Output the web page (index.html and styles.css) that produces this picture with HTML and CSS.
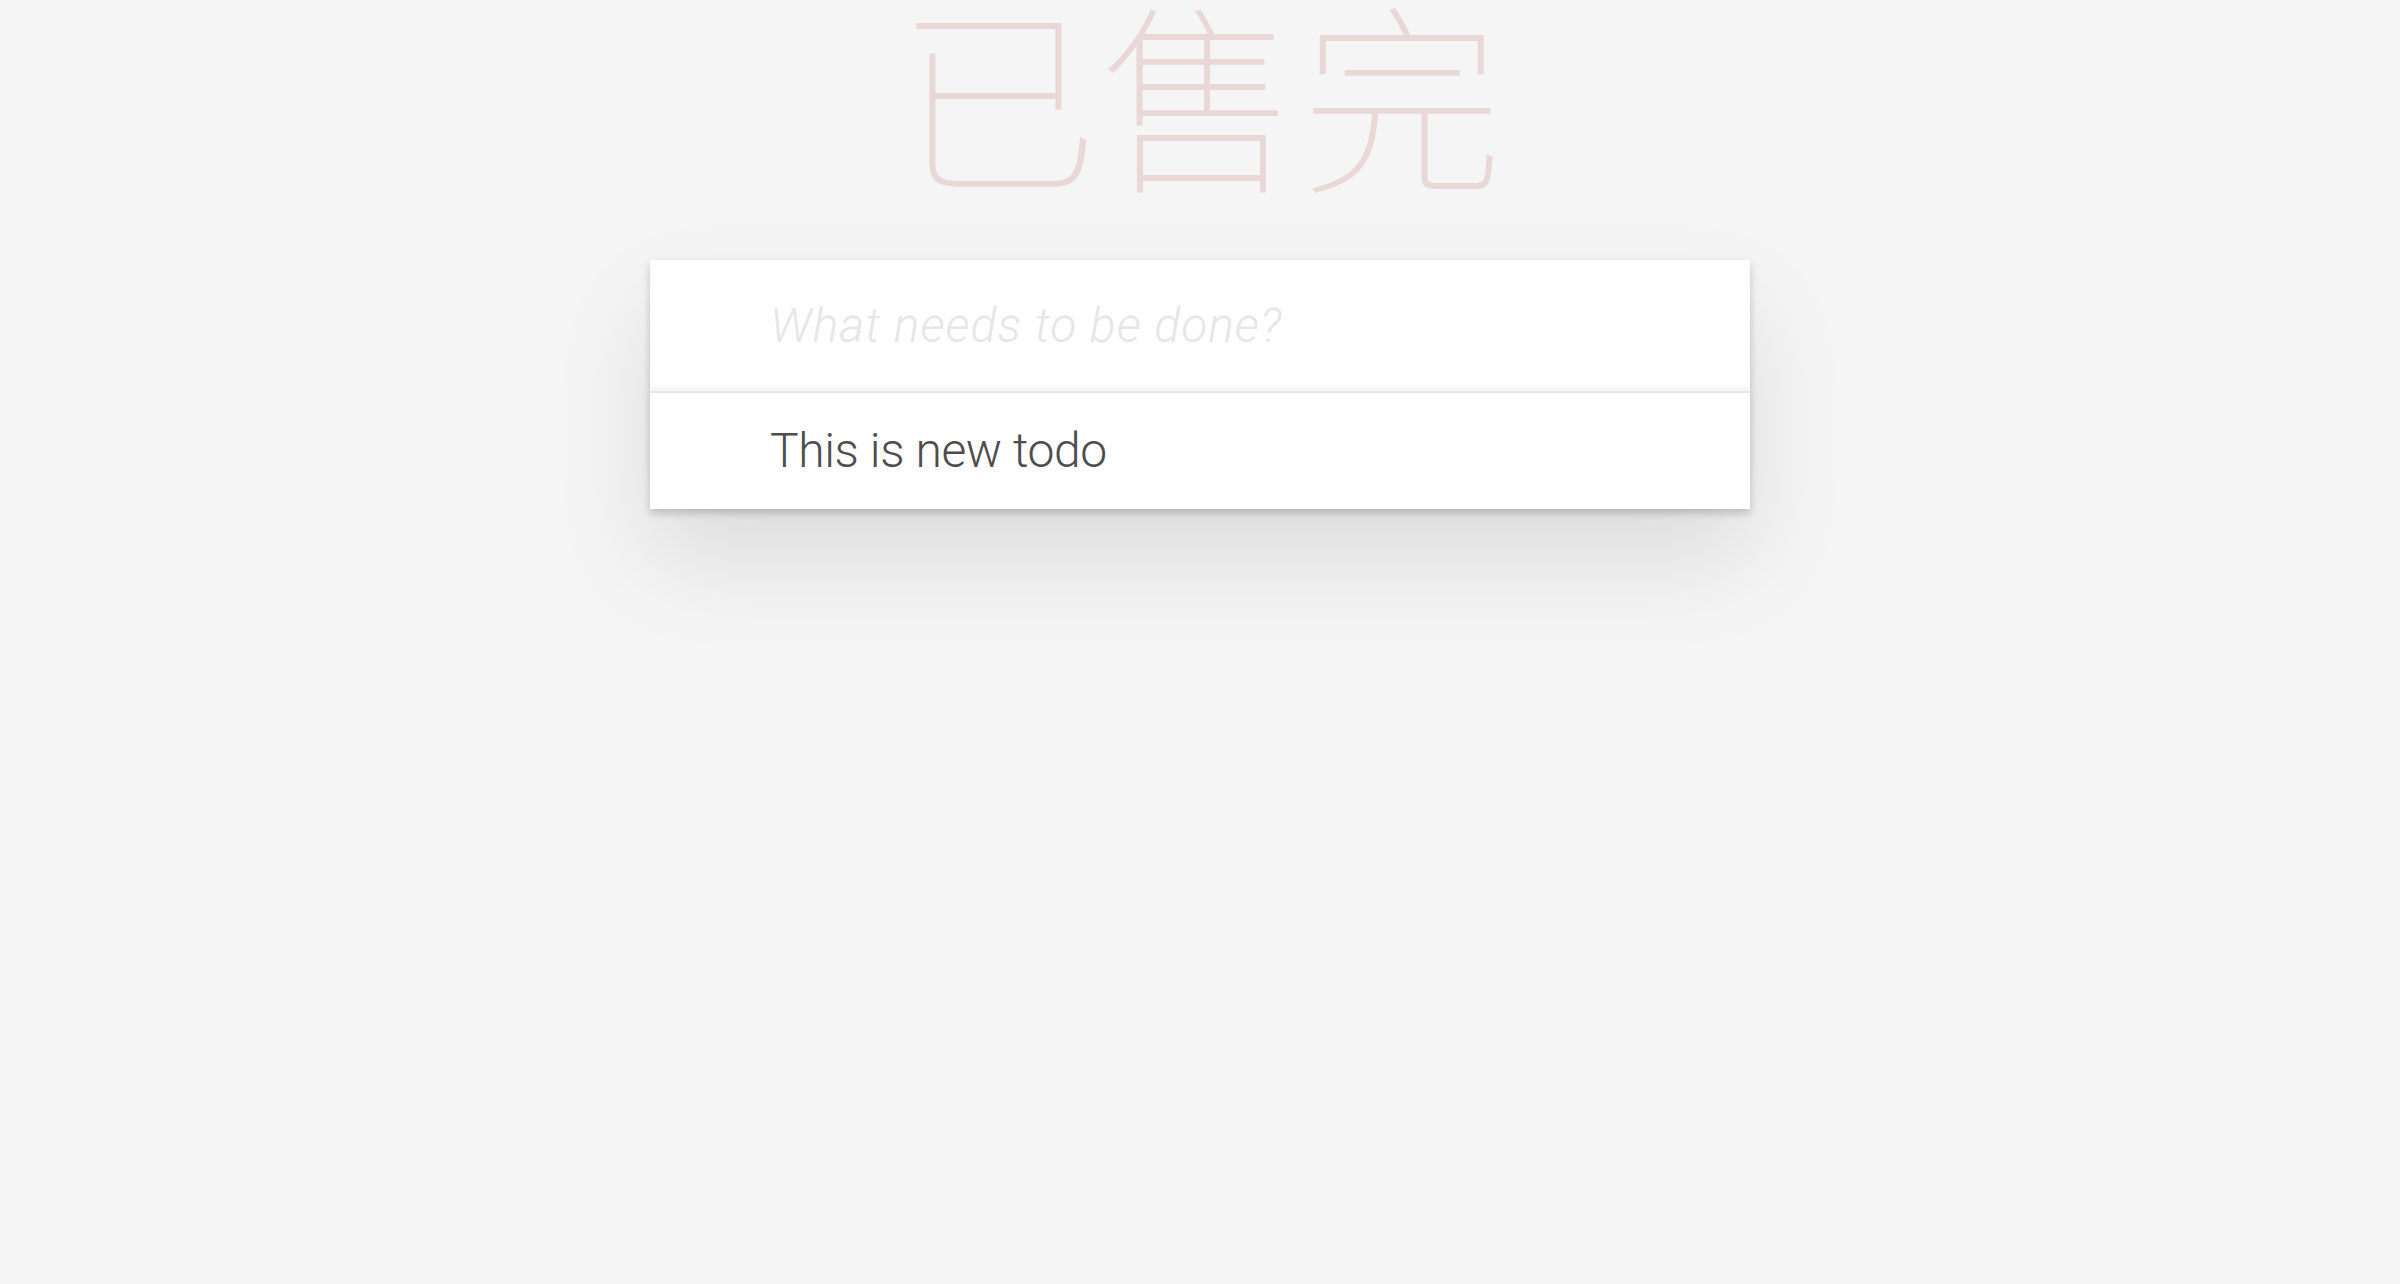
FILE: index.html
```html
<!DOCTYPE html>
<html lang="zh">
<head>
<meta charset="utf-8">
<title>Todo</title>
<link rel="stylesheet" href="styles.css">
</head>
<body>
<div class="page">
  <h1 class="title">已售完</h1>
  <section class="todoapp">
    <header class="header">
      <input class="new-todo" type="text" placeholder="What needs to be done?">
    </header>
    <section class="main">
      <ul class="todo-list">
        <li class="todo-item"><label class="todo-label">This is new todo</label></li>
      </ul>
    </section>
  </section>
</div>
</body>
</html>
```
FILE: styles.css
```css
html, body {
  margin: 0;
  padding: 0;
}
body {
  min-height: 100vh;
  background: #f5f5f5;
  color: #4d4d4d;
  font-family: Roboto, "Liberation Sans", sans-serif;
  font-weight: 300;
  font-size: 28px;
}
.page {
  max-width: 1100px;
  margin: 0 auto;
  padding-bottom: 80px;
}
.title {
  margin: 0;
  height: 260px;
  box-sizing: border-box;
  padding-top: 0;
  font-family: "Noto Sans CJK SC", sans-serif;
  font-size: 202px;
  line-height: 180px;
  font-weight: 100;
  text-align: center;
  color: rgba(175, 47, 47, 0.15);
}
.todoapp {
  background: #fff;
  box-shadow: 0 4px 8px 0 rgba(0, 0, 0, 0.2), 0 50px 100px 0 rgba(0, 0, 0, 0.1);
}
.header {
  display: block;
}
.new-todo {
  display: block;
  width: 100%;
  box-sizing: border-box;
  margin: 0;
  padding: 32px 32px 32px 120px;
  border: none;
  outline: none;
  background: rgba(0, 0, 0, 0.003);
  box-shadow: inset 0 -4px 2px rgba(0, 0, 0, 0.03);
  font-family: Roboto, "Liberation Sans", sans-serif;
  font-weight: 300;
  font-size: 48px;
  line-height: 1.4;
  color: #4d4d4d;
}
.new-todo::placeholder {
  font-style: italic;
  font-weight: 300;
  letter-spacing: 1px;
  color: #e6e6e6;
}
.main {
  border-top: 2px solid #e6e6e6;
}
.todo-list {
  list-style: none;
  margin: 0;
  padding: 0;
}
.todo-item {
  font-size: 48px;
}
.todo-label {
  display: block;
  padding: 29px 30px 29px 120px;
  line-height: 1.2;
  letter-spacing: -0.4px;
}
```
